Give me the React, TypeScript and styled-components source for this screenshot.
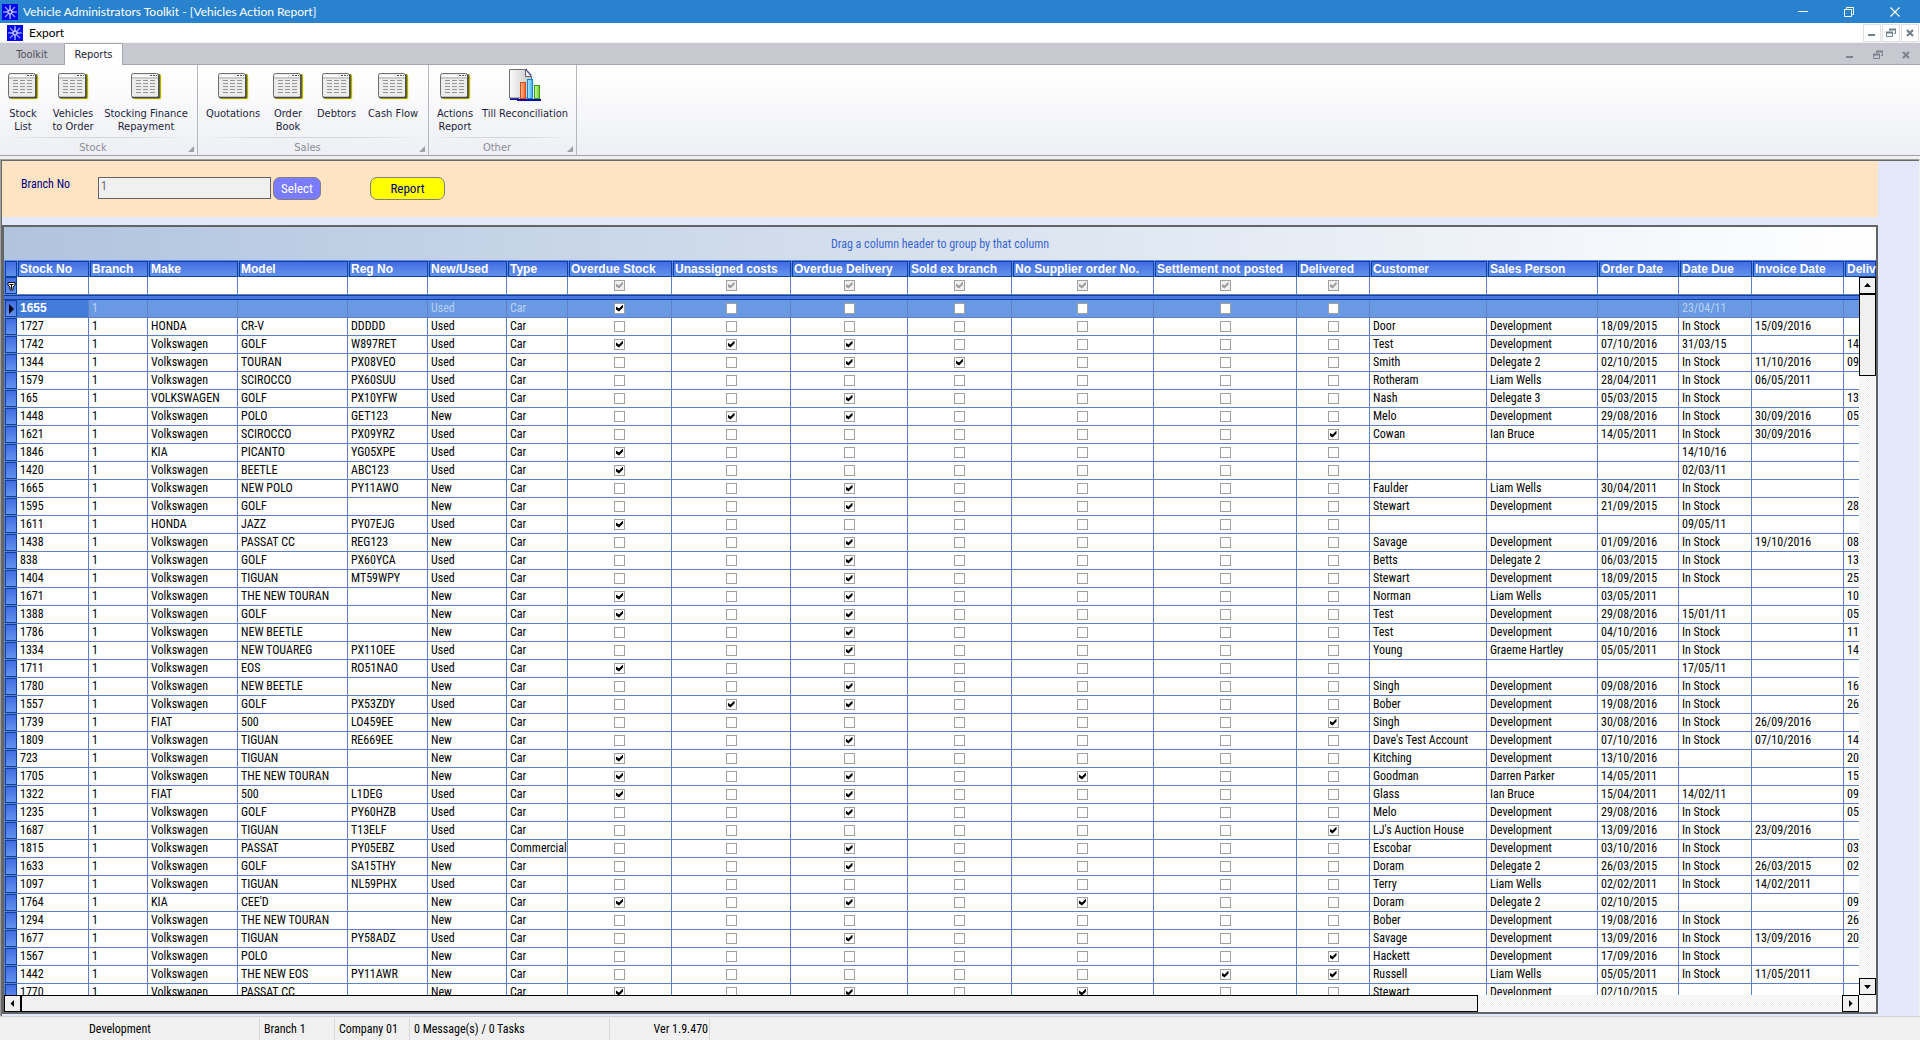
import React from "react";
import styled, { createGlobalStyle, css } from "styled-components";

const gridFont = `"Roboto Condensed", Roboto, "Liberation Sans", sans-serif`;
const ribbonFont = `"DejaVu Sans Condensed", "DejaVu Sans", sans-serif`;
const windowFont = `Lato, "Open Sans", sans-serif`;
const headerFont = `"Liberation Sans", Arial, sans-serif`;

const line = "#5f7fc8";
const dark = "#0a429e";
const blueFill = "linear-gradient(#4169e1, #6495ed)";

const GlobalStyle = createGlobalStyle`
  * { box-sizing: border-box; }
  body { margin: 0; background: #f0f0f0; font-family: ${gridFont}; font-size: 12px; color: #000; }
  button, input { font: inherit; color: inherit; margin: 0; }
`;

const Window = styled.div`
  display: flex;
  flex-direction: column;
  height: 100vh;
  overflow: hidden;
`;

const TitleBar = styled.header`
  display: flex;
  align-items: center;
  flex: none;
  height: 23px;
  padding: 0 2px;
  gap: 5px;
  background: #2882cd;
  color: #fff;
  font-family: ${windowFont};
`;

const Title = styled.h1`
  flex: 1;
  margin: 0;
  font-size: 12px;
  font-weight: 400;
  line-height: 16px;
`;

const CaptionButtons = styled.div`
  display: flex;
  align-items: center;
`;

const CaptionButton = styled.button<{ $w: number; $framed?: boolean }>`
  display: flex;
  align-items: center;
  justify-content: center;
  width: ${(p) => p.$w}px;
  height: 18px;
  padding: 0;
  background: none;
  border: ${(p) => (p.$framed ? "1px solid #e0e0e0" : "0")};
`;

const MenuBar = styled.nav`
  display: flex;
  align-items: center;
  flex: none;
  height: 20px;
  padding: 1px 1px 0 7px;
  gap: 1px;
  background: #fff;
  border-bottom: 1px solid #f0f0f0;
`;

const MenuItem = styled.button`
  margin-right: auto;
  padding: 0 5px;
  background: none;
  border: 0;
  font-family: ${windowFont};
  line-height: 16px;
`;

const TabStrip = styled.div`
  display: flex;
  align-items: flex-end;
  flex: none;
  height: 22px;
  background: #c8c8d0;
  border-bottom: 1px solid #a2a6b0;
  font-family: ${ribbonFont};
  font-size: 11px;
`;

const Tab = styled.button<{ $active?: boolean }>`
  height: 21px;
  padding: 0;
  width: ${(p) => (p.$active ? 59 : 64)}px;
  border: 1px solid transparent;
  border-bottom: 0;
  background: none;
  color: #50505a;
  ${(p) =>
    p.$active &&
    css`
      height: 22px;
      margin-bottom: -1px;
      background: #fff;
      border-color: #a2a6b0;
      border-radius: 2px 2px 0 0;
      color: #1e1e3c;
    `}
`;

const Spacer = styled.div`
  flex: 1;
`;

const Ribbon = styled.div`
  display: flex;
  flex: none;
  height: 91px;
  background: linear-gradient(#fff, #fbfbfc 30%, #edeff4);
  border-bottom: 1px solid #9fa3ab;
  font-family: ${ribbonFont};
  font-size: 11px;
  line-height: 13px;
  color: #1e1e3c;
`;

const Group = styled.section`
  display: flex;
  flex-direction: column;
  padding: 0 6px 0 1px;
  border-right: 1px solid #b4b7be;
`;

const GroupButtons = styled.div`
  display: flex;
  flex: 1;
`;

const RibbonButton = styled.button<{ $w: number }>`
  display: flex;
  flex-direction: column;
  align-items: center;
  gap: 6px;
  width: ${(p) => p.$w}px;
  padding: 4px 0 0;
  background: none;
  border: 0;
  white-space: pre;
  text-align: center;
`;

const GroupCaption = styled.h2`
  position: relative;
  margin: 0;
  height: 18px;
  padding: 4px 6px 0 0;
  background: linear-gradient(90deg, transparent, #d4d6dc 30%, #d4d6dc 70%, transparent) top / 100% 1px no-repeat;
  color: #8c8c96;
  font-size: 11px;
  font-weight: 400;
  text-align: center;
`;

const Launcher = styled.svg`
  position: absolute;
  right: -3px;
  bottom: 3px;
`;

const Workspace = styled.main`
  display: flex;
  flex: 1;
  flex-direction: column;
  min-height: 0;
  margin-top: 3px;
  padding: 0 41px 2px 0;
  background: #e3e8fb;
  border-style: solid;
  border-width: 1px 1px 0 1px;
  border-color: #a0a0a0 #f0f0f0 #a0a0a0 #a0a0a0;
  box-shadow: inset 1px 1px #696969;
`;

const FilterForm = styled.form`
  display: flex;
  align-items: flex-start;
  flex: none;
  height: 56px;
  margin: 1px 0 8px 1px;
  padding: 16px 19px;
  background: #ffe4c4;
`;

const FieldLabel = styled.label`
  width: 77px;
  color: #000080;
  line-height: 14px;
`;

const BranchInput = styled.input`
  width: 173px;
  height: 22px;
  padding: 0 2px 4px;
  background: #f0f0f0;
  border: 1px solid #646464;
  color: #6d6d6d;
`;

const PillButton = styled.button<{ $primary?: boolean }>`
  height: 23px;
  padding: 0;
  width: ${(p) => (p.$primary ? 75 : 48)}px;
  margin-left: ${(p) => (p.$primary ? 49 : 2)}px;
  background: ${(p) => (p.$primary ? "#ffff00" : "#7b7bff")};
  color: ${(p) => (p.$primary ? "#000080" : "#fff")};
  border: 1px solid #808080;
  border-radius: 7px;
  font-size: 13px;
  line-height: 19px;
`;

const GridFrame = styled.section`
  display: flex;
  flex: 1;
  flex-direction: column;
  min-height: 0;
  margin-left: 1px;
  border: 2px solid #646464;
  background: #fff;
`;

const GroupByBar = styled.div`
  display: flex;
  align-items: center;
  justify-content: center;
  flex: none;
  height: 33px;
  background: linear-gradient(90deg, #b0c4de, #fff);
  color: #3a66d6;
`;

const GridViewport = styled.div`
  position: relative;
  flex: 1;
  min-height: 0;
  overflow: hidden;
`;

const DataTable = styled.table`
  width: 100%;
  table-layout: fixed;
  border-collapse: separate;
  border-spacing: 0;
  line-height: 16px;
  white-space: nowrap;
`;

const Col = styled.col<{ $w?: number }>`
  width: ${(p) => (p.$w ? `${p.$w}px` : "auto")};
`;

const blueCell = css`
  padding: 0;
  background: ${blueFill};
  box-shadow: inset 0 0 0 1px ${dark};
`;

const HeadCell = styled.th`
  ${blueCell}
  height: 17px;
  padding-left: 2px;
  border: solid #5f86ea;
  border-width: 1px 0 0 1px;
  overflow: hidden;
  color: #fff;
  font: bold 12px/16px ${headerFont};
  text-align: left;
`;

const RowSelector = styled.th`
  ${blueCell}
  border: solid ${line};
  border-width: 0 0 1px 1px;
  line-height: 0;
`;

const Cell = styled.td<{ $center?: boolean }>`
  height: 18px;
  padding: 0 0 1px ${(p) => (p.$center ? 0 : 3)}px;
  border: solid ${line};
  border-width: 0 1px 1px 0;
  overflow: hidden;
  text-align: ${(p) => (p.$center ? "center" : "left")};
`;

const Row = styled.tr<{ $selected?: boolean }>`
  ${(p) =>
    p.$selected &&
    css`
      background: #6a99e4;
      color: #b9d1f4;
      ${Cell}:nth-child(2) {
        background: #427bd9;
        color: #fff;
        font: bold 12px/16px ${headerFont};
      }
    `}
`;

const Divider = styled.td`
  height: 5px;
  padding: 0;
  background: #4a74e0;
  border: solid ${dark};
  border-width: 1px 0;
  box-shadow: 0 -1px ${line};
`;

const Check = styled.input`
  appearance: none;
  display: block;
  width: 11px;
  height: 11px;
  margin: 0 auto;
  border: 1px solid #a0a0a0;
  background: #fff;
  &:checked::before {
    content: "";
    display: block;
    width: 7px;
    height: 7px;
    margin: 1px;
    background: #000;
    clip-path: polygon(0 2px, 3px 4px, 7px 0, 7px 3px, 3px 7px, 0 5px);
  }
  &:disabled {
    background: #f0f0f0;
  }
  &:disabled::before {
    background: #a0a0a0;
  }
`;

const track = css`
  background: repeating-conic-gradient(#fff 0 25%, #efefef 0 50%) 0 0 / 2px 2px;
`;

const VScroll = styled.div`
  position: absolute;
  top: 17px;
  right: 0;
  bottom: 0;
  display: flex;
  flex-direction: column;
  width: 17px;
  ${track}
`;

const HScroll = styled.div`
  display: flex;
  flex: none;
  height: 17px;
  padding-right: 17px;
  ${track}
`;

const ScrollButton = styled.button`
  display: flex;
  flex: none;
  align-items: center;
  justify-content: center;
  width: 17px;
  height: 17px;
  padding: 0;
  background: #f0f0f0;
  border: 1px solid #000;
`;

const ScrollTrack = styled.div<{ $vertical?: boolean }>`
  display: flex;
  flex: 1;
  flex-direction: ${(p) => (p.$vertical ? "column" : "row")};
`;

const Thumb = styled.div`
  flex: none;
  flex-basis: 80%;
  background: #f0f0f0;
  border: 1px solid #000;
  ${VScroll} & {
    flex-basis: 12%;
  }
`;

const StatusBar = styled.footer`
  display: flex;
  flex: none;
  height: 24px;
  padding-top: 1px;
  border-top: 1px solid #d2d2d2;
  background: #f0f0f0;
  line-height: 22px;
`;

const StatusPane = styled.div<{ $w: number; $pad?: number; $right?: boolean }>`
  width: ${(p) => p.$w}px;
  padding: 0 1px 0 ${(p) => p.$pad ?? 4}px;
  border-right: 1px solid #d7d7d7;
  text-align: ${(p) => (p.$right ? "right" : "left")};
`;

const AppIcon = () => (
  <svg width="16" height="16" viewBox="0 0 16 16" aria-hidden="true">
    <rect width="16" height="16" fill="#0404f4" />
    <path d="M8 1v14M1 8h14" stroke="#c4ccff" strokeWidth="1.200" />
    <path d="M3 3l10 10M13 3L3 13" stroke="#98a4ff" strokeWidth="1.200" />
    <path d="M8 2.500l1.200 3.300L13.500 8l-4.300 1.200L8 13.500l-1.200-4.300L2.500 8l4.300-2.200z" fill="#8c9aff" />
    <circle cx="8" cy="8" r="2" fill="#2a2af0" stroke="#e4e8ff" />
  </svg>
);

const ReportIcon = () => (
  <svg width="32" height="32" viewBox="0 0 32 32" aria-hidden="true">
    <rect x="3" y="5" width="29" height="26" rx="3" fill="#f6f47c" opacity="0.600" />
    <rect x="3" y="5" width="28" height="25" rx="2" fill="#b4b010" />
    <rect x="1.500" y="4.500" width="27" height="24" rx="2" fill="#ececec" stroke="#6e6e6e" />
    <path d="M2 28.500h27v-23" fill="none" stroke="#484848" strokeWidth="1.500" />
    <path d="M3 6h24v2H3z" fill="#fafafa" />
    <path d="M2 9h26" stroke="#a8a8a8" />
    <path d="M20 6.500h2m1 0h2m1 0h1" stroke="#555" />
    {[11.5, 14.5, 17.5, 20.5, 23.5].map((y) => (
      <path key={y} d={`M6 ${y}h5m2 0h5m2 0h5`} stroke="#969696" />
    ))}
  </svg>
);

const ChartIcon = () => (
  <svg width="32" height="32" viewBox="0 0 32 32" aria-hidden="true">
    <defs>
      <linearGradient id="sheet">
        <stop offset="0" stopColor="#fafafa" />
        <stop offset="1" stopColor="#c4c4c4" />
      </linearGradient>
      <linearGradient id="orange">
        <stop offset="0" stopColor="#ffc09c" />
        <stop offset="1" stopColor="#f06020" />
      </linearGradient>
      <linearGradient id="blue">
        <stop offset="0" stopColor="#b8ecff" />
        <stop offset="1" stopColor="#38b0f0" />
      </linearGradient>
      <linearGradient id="green">
        <stop offset="0" stopColor="#d4f8a0" />
        <stop offset="1" stopColor="#70cc30" />
      </linearGradient>
    </defs>
    <path d="M1 30h8v1h23" stroke="#0a0aa8" strokeWidth="2" fill="none" />
    <path d="M.5.5h16l6 7V29H.5z" fill="url(#sheet)" stroke="#707070" />
    <path d="M16.500.5v7h6z" fill="#eee" stroke="#606070" />
    <path d="M17 0l6 7" stroke="#0a0aa8" strokeDasharray="2 1" />
    <rect x="11.500" y="13.500" width="5" height="16" fill="url(#orange)" stroke="#d84c14" />
    <rect x="18.500" y="10.500" width="5" height="19" fill="url(#blue)" stroke="#0c84d0" />
    <rect x="25.500" y="16.500" width="5" height="13" fill="url(#green)" stroke="#38a010" />
  </svg>
);

const Minimise = ({ color, thick }: { color: string; thick?: boolean }) => (
  <svg width="10" height="10" aria-hidden="true">
    {thick ? <path d="M1 7h7" stroke={color} strokeWidth="2" /> : <path d="M0 4.500h10" stroke={color} />}
  </svg>
);

const Restore = ({ color, thick }: { color: string; thick?: boolean }) => (
  <svg width="10" height="10" aria-hidden="true" fill="none" stroke={color}>
    {thick ? (
      <>
        <path d="M3.500 3V1.500h6v4H8M.5 4.500h6v4h-6z" />
        <path d="M3 1.500h7M0 4.500h7" strokeWidth="2" />
      </>
    ) : (
      <path d="M2.500 2V.5h7v7H8M.5 2.500h7v7h-7z" />
    )}
  </svg>
);

const Close = ({ color, thick }: { color: string; thick?: boolean }) => (
  <svg width="10" height="10" aria-hidden="true">
    {thick ? (
      <path d="M2 2l6 6M8 2L2 8" stroke={color} strokeWidth="2.200" />
    ) : (
      <path d="M.5.5l9 9M9.500.5l-9 9" stroke={color} strokeWidth="1.200" />
    )}
  </svg>
);

const arrows = {
  up: "M0 5l3.500-4L7 5z",
  down: "M0 2l3.500 4L7 2z",
  left: "M5 0v7L1.500 3.500z",
  right: "M2 0v7l3.500-3.500z",
};

const Arrow = ({ dir }: { dir: keyof typeof arrows }) => (
  <svg width="7" height="7" aria-hidden="true">
    <path d={arrows[dir]} />
  </svg>
);

const RowMarker = () => (
  <svg width="5" height="10" aria-hidden="true">
    <path d="M0 0v10l5-5z" />
  </svg>
);

const Funnel = () => (
  <svg width="9" height="10" viewBox="0 0 9 10" aria-hidden="true">
    <path d="M1 1.500h7v2.500l-2 2v3H3V6L1 4z" fill="#fff" stroke="#000" />
    <path d="M2.500 3.500h4M4.500 3v5" stroke="#000" />
  </svg>
);

type Button = { label: string; w: number; chart?: boolean };

const groups: { name: string; buttons: Button[] }[] = [
  {
    name: "Stock",
    buttons: [
      { label: "Stock\nList", w: 44 },
      { label: "Vehicles\nto Order", w: 56 },
      { label: "Stocking Finance\nRepayment", w: 90 },
    ],
  },
  {
    name: "Sales",
    buttons: [
      { label: "Quotations", w: 68 },
      { label: "Order\nBook", w: 42 },
      { label: "Debtors", w: 55 },
      { label: "Cash Flow", w: 58 },
    ],
  },
  {
    name: "Other",
    buttons: [
      { label: "Actions\nReport", w: 50 },
      { label: "Till Reconciliation", w: 90, chart: true },
    ],
  },
];

const columns: { title: string; w?: number; flag?: string }[] = [
  { title: "Stock No", w: 72 },
  { title: "Branch", w: 59 },
  { title: "Make", w: 90 },
  { title: "Model", w: 110 },
  { title: "Reg No", w: 80 },
  { title: "New/Used", w: 79 },
  { title: "Type", w: 61 },
  { title: "Overdue Stock", w: 104, flag: "s" },
  { title: "Unassigned costs", w: 119, flag: "u" },
  { title: "Overdue Delivery", w: 117, flag: "d" },
  { title: "Sold ex branch", w: 104, flag: "x" },
  { title: "No Supplier order No.", w: 142, flag: "n" },
  { title: "Settlement not posted", w: 143, flag: "p" },
  { title: "Delivered", w: 73, flag: "v" },
  { title: "Customer", w: 117 },
  { title: "Sales Person", w: 111 },
  { title: "Order Date", w: 81 },
  { title: "Date Due", w: 73 },
  { title: "Invoice Date", w: 92 },
  { title: "Delivery" },
];

// stock | make | model | reg | condition | flags | customer | sales person | ordered | due | invoiced | delivery
const data = `
1655||||Used|s||||23/04/11||
1727|HONDA|CR-V|DDDDD|Used||Door|Development|18/09/2015|In Stock|15/09/2016|
1742|Volkswagen|GOLF|W897RET|Used|sud|Test|Development|07/10/2016|31/03/15||14
1344|Volkswagen|TOURAN|PX08VEO|Used|dx|Smith|Delegate 2|02/10/2015|In Stock|11/10/2016|09
1579|Volkswagen|SCIROCCO|PX60SUU|Used||Rotheram|Liam Wells|28/04/2011|In Stock|06/05/2011|
165|VOLKSWAGEN|GOLF|PX10YFW|Used|d|Nash|Delegate 3|05/03/2015|In Stock||13
1448|Volkswagen|POLO|GET123|New|ud|Melo|Development|29/08/2016|In Stock|30/09/2016|05
1621|Volkswagen|SCIROCCO|PX09YRZ|Used|v|Cowan|Ian Bruce|14/05/2011|In Stock|30/09/2016|
1846|KIA|PICANTO|YG05XPE|Used|s||||14/10/16||
1420|Volkswagen|BEETLE|ABC123|Used|s||||02/03/11||
1665|Volkswagen|NEW POLO|PY11AWO|New|d|Faulder|Liam Wells|30/04/2011|In Stock||
1595|Volkswagen|GOLF||New|d|Stewart|Development|21/09/2015|In Stock||28
1611|HONDA|JAZZ|PY07EJG|Used|s||||09/05/11||
1438|Volkswagen|PASSAT CC|REG123|New|d|Savage|Development|01/09/2016|In Stock|19/10/2016|08
838|Volkswagen|GOLF|PX60YCA|Used|d|Betts|Delegate 2|06/03/2015|In Stock||13
1404|Volkswagen|TIGUAN|MT59WPY|Used|d|Stewart|Development|18/09/2015|In Stock||25
1671|Volkswagen|THE NEW TOURAN||New|sd|Norman|Liam Wells|03/05/2011|||10
1388|Volkswagen|GOLF||New|sd|Test|Development|29/08/2016|15/01/11||05
1786|Volkswagen|NEW BEETLE||New|d|Test|Development|04/10/2016|In Stock||11
1334|Volkswagen|NEW TOUAREG|PX11OEE|Used|d|Young|Graeme Hartley|05/05/2011|In Stock||14
1711|Volkswagen|EOS|RO51NAO|Used|s||||17/05/11||
1780|Volkswagen|NEW BEETLE||New|d|Singh|Development|09/08/2016|In Stock||16
1557|Volkswagen|GOLF|PX53ZDY|Used|ud|Bober|Development|19/08/2016|In Stock||26
1739|FIAT|500|LO459EE|New|v|Singh|Development|30/08/2016|In Stock|26/09/2016|
1809|Volkswagen|TIGUAN|RE669EE|New|d|Dave's Test Account|Development|07/10/2016|In Stock|07/10/2016|14
723|Volkswagen|TIGUAN||New|s|Kitching|Development|13/10/2016|||20
1705|Volkswagen|THE NEW TOURAN||New|sdn|Goodman|Darren Parker|14/05/2011|||15
1322|FIAT|500|L1DEG|Used|sd|Glass|Ian Bruce|15/04/2011|14/02/11||09
1235|Volkswagen|GOLF|PY60HZB|Used|d|Melo|Development|29/08/2016|In Stock||05
1687|Volkswagen|TIGUAN|T13ELF|Used|v|LJ's Auction House|Development|13/09/2016|In Stock|23/09/2016|
1815|Volkswagen|PASSAT|PY05EBZ|Used|d|Escobar|Development|03/10/2016|In Stock||03
1633|Volkswagen|GOLF|SA15THY|New|d|Doram|Delegate 2|26/03/2015|In Stock|26/03/2015|02
1097|Volkswagen|TIGUAN|NL59PHX|Used||Terry|Liam Wells|02/02/2011|In Stock|14/02/2011|
1764|KIA|CEE'D||New|sdn|Doram|Delegate 2|02/10/2015|||09
1294|Volkswagen|THE NEW TOURAN||New||Bober|Development|19/08/2016|In Stock||26
1677|Volkswagen|TIGUAN|PY58ADZ|Used|d|Savage|Development|13/09/2016|In Stock|13/09/2016|20
1567|Volkswagen|POLO||New|v|Hackett|Development|17/09/2016|In Stock||
1442|Volkswagen|THE NEW EOS|PY11AWR|New|pv|Russell|Liam Wells|05/05/2011|In Stock|11/05/2011|
1770|Volkswagen|PASSAT CC||New|sdn|Stewart|Development|02/10/2015|||
`
  .trim()
  .split("\n")
  .map((row) => {
    const [stock, make, model, reg, condition, flags, ...rest] = row.split("|");
    const type = stock === "1815" ? "Commercial" : "Car";
    return { flags, texts: [stock, "1", make, model, reg, condition, type, ...rest] };
  });

const flagCount = columns.filter((c) => c.flag).length;

export default function App() {
  return (
    <Window>
      <GlobalStyle />
      <TitleBar>
        <AppIcon />
        <Title>Vehicle Administrators Toolkit - [Vehicles Action Report]</Title>
        <CaptionButtons>
          <CaptionButton $w={46} aria-label="Minimise"><Minimise color="#fff" /></CaptionButton>
          <CaptionButton $w={46} aria-label="Restore"><Restore color="#fff" /></CaptionButton>
          <CaptionButton $w={46} aria-label="Close"><Close color="#fff" /></CaptionButton>
        </CaptionButtons>
      </TitleBar>
      <MenuBar>
        <AppIcon />
        <MenuItem>Export</MenuItem>
        <CaptionButton $w={18} $framed aria-label="Minimise report"><Minimise color="#70808c" thick /></CaptionButton>
        <CaptionButton $w={18} $framed aria-label="Restore report"><Restore color="#70808c" thick /></CaptionButton>
        <CaptionButton $w={18} $framed aria-label="Close report"><Close color="#70808c" thick /></CaptionButton>
      </MenuBar>
      <TabStrip>
        <Tab>Toolkit</Tab>
        <Tab $active>Reports</Tab>
        <Spacer />
        <CaptionButton $w={28} aria-label="Minimise ribbon"><Minimise color="#808090" thick /></CaptionButton>
        <CaptionButton $w={28} aria-label="Restore ribbon"><Restore color="#808090" thick /></CaptionButton>
        <CaptionButton $w={28} aria-label="Close ribbon"><Close color="#808090" thick /></CaptionButton>
      </TabStrip>
      <Ribbon>
        {groups.map((g) => (
          <Group key={g.name}>
            <GroupButtons>
              {g.buttons.map((b) => (
                <RibbonButton key={b.label} $w={b.w}>
                  {b.chart ? <ChartIcon /> : <ReportIcon />}
                  {b.label}
                </RibbonButton>
              ))}
            </GroupButtons>
            <GroupCaption>
              {g.name}
              <Launcher width="6" height="6" aria-hidden="true"><path d="M6 0v6H0z" fill="#a0a0a8" /></Launcher>
            </GroupCaption>
          </Group>
        ))}
      </Ribbon>
      <Workspace>
        <FilterForm onSubmit={(e) => e.preventDefault()}>
          <FieldLabel htmlFor="branch">Branch No</FieldLabel>
          <BranchInput id="branch" defaultValue="1" readOnly />
          <PillButton type="button">Select</PillButton>
          <PillButton type="submit" $primary>Report</PillButton>
        </FilterForm>
        <GridFrame>
          <GroupByBar>Drag a column header to group by that column</GroupByBar>
          <GridViewport>
            <DataTable>
              <colgroup>
                <Col $w={13} />
                {columns.map((c) => <Col key={c.title} $w={c.w} />)}
              </colgroup>
              <thead>
                <tr>
                  <HeadCell />
                  {columns.map((c) => <HeadCell key={c.title} scope="col">{c.title}</HeadCell>)}
                </tr>
              </thead>
              <tbody>
                <Row>
                  <RowSelector><Funnel /></RowSelector>
                  {columns.map((c) => (
                    <Cell key={c.title} $center={!!c.flag}>
                      {c.flag && <Check type="checkbox" defaultChecked disabled aria-label={`Filter ${c.title}`} />}
                    </Cell>
                  ))}
                </Row>
                <tr><Divider colSpan={columns.length + 1} /></tr>
                {data.map((r, i) => (
                  <Row key={r.texts[0]} $selected={i === 0}>
                    <RowSelector>{i === 0 && <RowMarker />}</RowSelector>
                    {columns.map((c, j) => (
                      <Cell key={c.title} $center={!!c.flag}>
                        {c.flag ? (
                          <Check type="checkbox" defaultChecked={r.flags.includes(c.flag)} aria-label={c.title} />
                        ) : (
                          r.texts[j < 7 ? j : j - flagCount]
                        )}
                      </Cell>
                    ))}
                  </Row>
                ))}
              </tbody>
            </DataTable>
            <VScroll>
              <ScrollButton aria-label="Scroll up"><Arrow dir="up" /></ScrollButton>
              <ScrollTrack $vertical><Thumb /></ScrollTrack>
              <ScrollButton aria-label="Scroll down"><Arrow dir="down" /></ScrollButton>
            </VScroll>
          </GridViewport>
          <HScroll>
            <ScrollButton aria-label="Scroll left"><Arrow dir="left" /></ScrollButton>
            <ScrollTrack><Thumb /></ScrollTrack>
            <ScrollButton aria-label="Scroll right"><Arrow dir="right" /></ScrollButton>
          </HScroll>
        </GridFrame>
      </Workspace>
      <StatusBar>
        <StatusPane $w={260} $pad={89}>Development</StatusPane>
        <StatusPane $w={75}>Branch 1</StatusPane>
        <StatusPane $w={75}>Company 01</StatusPane>
        <StatusPane $w={200}>0 Message(s) / 0 Tasks</StatusPane>
        <StatusPane $w={100} $right>Ver 1.9.470</StatusPane>
      </StatusBar>
    </Window>
  );
}
